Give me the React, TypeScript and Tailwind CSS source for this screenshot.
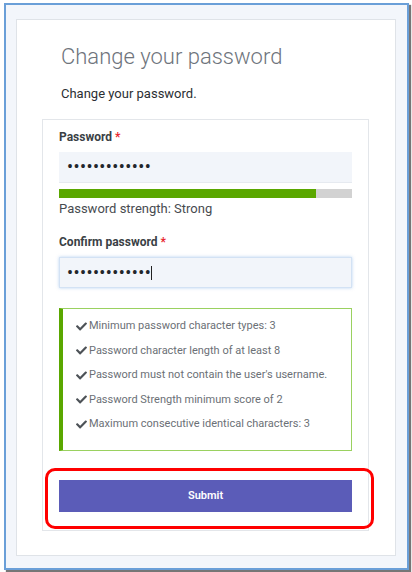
import React from "react";
import { FaCheck } from "react-icons/fa";

const reqs = [
  "Minimum password character types: 3",
  "Password character length of at least 8",
  "Password must not contain the user's username.",
  "Password Strength minimum score of 2",
  "Maximum consecutive identical characters: 3",
];

export default function App() {
  return (
    <div
      className="w-[412px] h-[572px] bg-white pt-[3px] pl-[4px]"
      style={{ fontFamily: 'Roboto, "Liberation Sans", sans-serif' }}
    >
      <div className="w-[405px] h-[567px] border-2 border-[#6a9fd8] bg-[#f3f6fb] pt-[14px] pl-[10px] shadow-[2px_2px_1px_rgba(60,60,60,0.7)]">
        <div className="w-[380px] h-[537px] bg-white border border-[#dfe3e8] pt-[22px]">
          <div className="pl-[44px]">
            <h1 className="text-[22px] leading-[30px] font-light text-[#6e747c]">
              Change your password
            </h1>
            <p className="mt-[13px] text-[13px] leading-[18px] text-[#2b2f33]">
              Change your password.
            </p>
          </div>
          <div className="relative ml-[25px] mt-[16px] w-[327px] border border-[#e3e6ea] px-[16px] pt-[9px] pb-[18px]">
            <div className="text-[12px] leading-[16px] font-bold text-[#3a3f45]">
              Password <span className="text-[#e8262e]">*</span>
            </div>
            <div className="mt-[7px] h-[31px] bg-[#f2f5fa] border-b border-[#e6eaf0] flex items-center pl-[8px]">
              <span className="text-[18px] leading-none tracking-[0.4px] text-[#22262b]">•••••••••••••</span>
            </div>
            <div className="mt-[6px] h-[9px] bg-[#d2d2d2] flex">
              <div className="w-[257px] h-full bg-[#5aa700]" />
            </div>
            <div className="mt-[2px] text-[13px] leading-[18px] text-[#474b50]">
              Password strength: Strong
            </div>
            <div className="mt-[16px] text-[12px] leading-[16px] font-bold text-[#3a3f45]">
              Confirm password <span className="text-[#e8262e]">*</span>
            </div>
            <div className="mt-[7px] h-[31px] bg-[#f2f5fa] border border-[#d3e2f4] shadow-[0_0_3px_rgba(120,170,230,0.5)] flex items-center pl-[7px]">
              <span className="text-[18px] leading-none tracking-[0.4px] text-[#22262b]">•••••••••••••</span>
              <span className="w-px h-[14px] bg-[#222]" />
            </div>
            <div className="mt-[20px] h-[143px] border border-[#9ad160] border-l-4 border-l-[#5aa700] pt-[5px] pl-[13px]">
              {reqs.map((r) => (
                <div key={r} className="flex items-center h-[24.5px] text-[11px] text-[#6b7076] whitespace-nowrap">
                  <FaCheck className="w-[11px] h-[11px] text-[#4d5257] mr-[2px] shrink-0" />
                  <span>{r}</span>
                </div>
              ))}
            </div>
            <button className="mt-[29px] w-full h-[32px] bg-[#5b5cb8] text-white text-[11px] font-semibold">
              Submit
            </button>
            <div className="absolute left-[2px] top-[348px] w-[329px] h-[61px] border-[3px] border-[#ff0000] rounded-[10px]" />
          </div>
        </div>
      </div>
    </div>
  );
}
